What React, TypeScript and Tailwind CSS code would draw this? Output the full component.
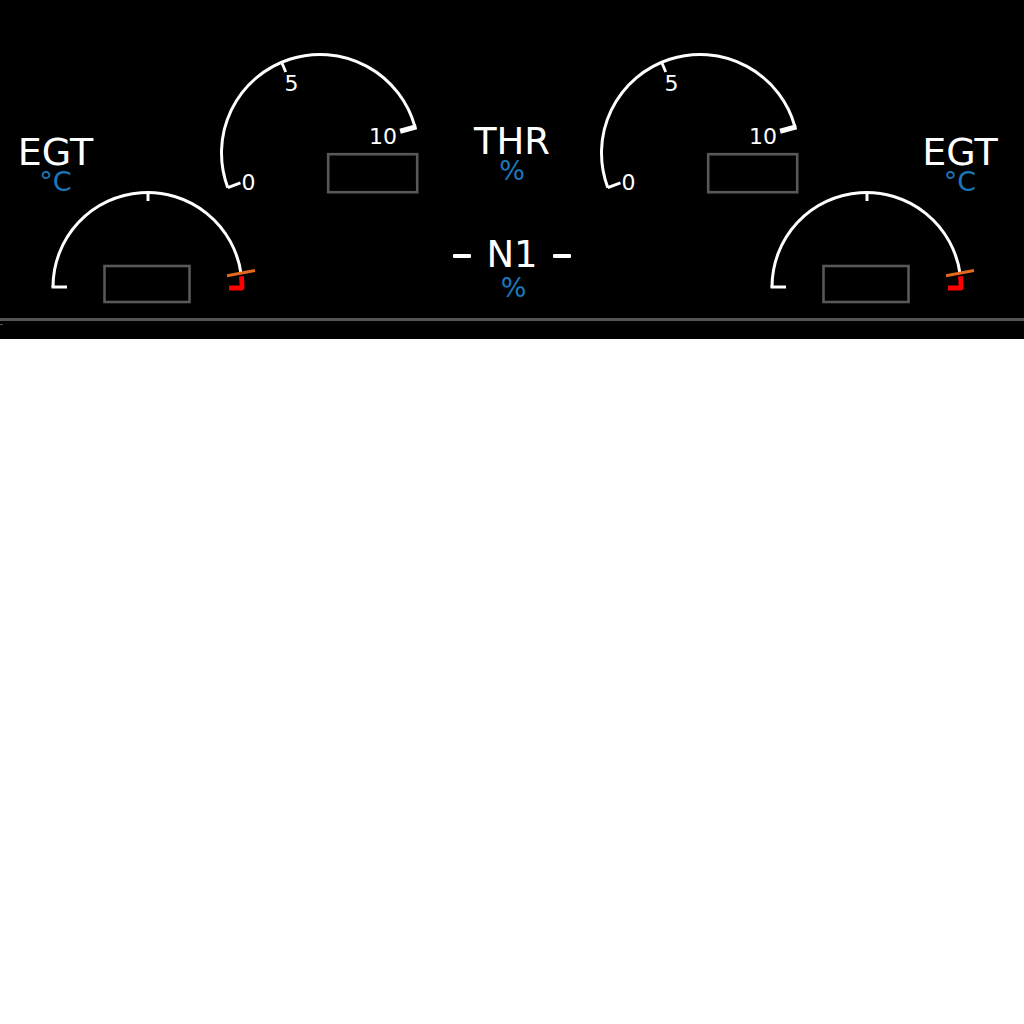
import React from "react";

const FONT = "font-['DejaVu_Sans',sans-serif]";

function polar(cx: number, cy: number, r: number, deg: number): [number, number] {
  const a = (deg * Math.PI) / 180;
  return [cx + r * Math.sin(a), cy - r * Math.cos(a)];
}

function arc(cx: number, cy: number, r: number, a0: number, a1: number) {
  const [x0, y0] = polar(cx, cy, r, a0);
  const [x1, y1] = polar(cx, cy, r, a1);
  const large = a1 - a0 > 180 ? 1 : 0;
  return `M ${x0} ${y0} A ${r} ${r} 0 ${large} 1 ${x1} ${y1}`;
}

function Tick({ cx, cy, r0, r1, a, w }: { cx: number; cy: number; r0: number; r1: number; a: number; w: number }) {
  const [x0, y0] = polar(cx, cy, r0, a);
  const [x1, y1] = polar(cx, cy, r1, a);
  return <line x1={x0} y1={y0} x2={x1} y2={y1} stroke="white" strokeWidth={w} />;
}

function ThrGauge({ left }: { left: number }) {
  const cx = 320;
  const cy = 153;
  const r = 98.5;
  const a0 = -110.6;
  const a5 = -22.9;
  const a10 = 74.8;
  return (
    <svg className="absolute" style={{ left, top: 40 }} width={240} height={170} viewBox="0 0 240 170">
      <g transform="translate(-200,-40)">
        <path d={arc(cx, cy, r, a0, a10)} stroke="white" strokeWidth={3} fill="none" />
        <Tick cx={cx} cy={cy} r0={r} r1={85} a={a0} w={3} />
        <Tick cx={cx} cy={cy} r0={r + 1} r1={88} a={a5} w={2.8} />
        <Tick cx={cx} cy={cy} r0={r + 1.5} r1={83} a={a10} w={5} />
        <g fill="white" fontFamily="'DejaVu Sans', sans-serif" fontSize={22} textAnchor="middle">
          <text x={248.5} y={190}>0</text>
          <text x={291.5} y={91}>5</text>
          <text x={383} y={144}>10</text>
        </g>
        <rect x={328.2} y={154.2} width={89} height={38} fill="none" stroke="#585858" strokeWidth={2.6} />
      </g>
    </svg>
  );
}

function EgtGauge({ left }: { left: number }) {
  const cx = 147.5;
  const cy = 287;
  const r = 94.5;
  const [rx, ry] = polar(cx, cy, r, 90);
  return (
    <svg className="absolute" style={{ left, top: 180 }} width={230} height={130} viewBox="0 0 230 130">
      <g transform="translate(-40,-180)">
        <path d={arc(cx, cy, r, -90, 82)} stroke="white" strokeWidth={3} fill="none" />
        <line x1={cx - r - 1.5} y1={cy} x2={67} y2={cy} stroke="white" strokeWidth={3} />
        <line x1={148} y1={191.5} x2={148} y2={201} stroke="white" strokeWidth={3} />
        <path
          d={`${arc(cx, cy, r, 83.5, 90)} L ${rx} ${ry + 1} L 229 ${ry + 1}`}
          stroke="#ff0000"
          strokeWidth={4.8}
          fill="none"
          strokeLinejoin="round"
        />
        <line x1={227} y1={275.7} x2={255} y2={270.5} stroke="#e2691d" strokeWidth={3} />
        <rect x={104.5} y={266} width={85} height={36} fill="none" stroke="#585858" strokeWidth={2.6} />
      </g>
    </svg>
  );
}

function EgtLabel({ center }: { center: number }) {
  return (
    <div
      className={`absolute flex w-[100px] flex-col items-center ${FONT}`}
      style={{ left: center - 50, top: 136.8 }}
    >
      <span className="h-[30px] text-[38px] leading-[30px] text-white">EGT</span>
      <span className="mt-[5.5px] h-[20px] text-[27px] leading-[20px] text-[#1a78b8]">°C</span>
    </div>
  );
}

export default function App() {
  return (
    <div className="w-[1024px] bg-white">
      <div className="flex h-[339px] w-full flex-col bg-black">
        <div className="relative h-[318px] w-full">
          <EgtLabel center={55.5} />
          <EgtLabel center={960} />

          <ThrGauge left={200} />
          <ThrGauge left={580} />

          <EgtGauge left={40} />
          <EgtGauge left={759} />

          <div className={`absolute left-[462px] top-[127.2px] flex w-[100px] flex-col items-center ${FONT}`}>
            <span className="h-[30px] text-[37px] leading-[30px] text-white">THR</span>
            <span className="mt-[3.4px] h-[20px] text-[27px] leading-[20px] text-[#1a78b8]">%</span>
          </div>

          <div className={`absolute left-[412px] top-[240.2px] flex w-[200px] flex-col items-center ${FONT}`}>
            <div className="flex h-[30px] items-center gap-[15px]">
              <div className="mt-[1px] h-[4px] w-[18px] rounded-[1px] bg-white" />
              <span className="h-[30px] text-[37px] leading-[30px] text-white">N1</span>
              <div className="mt-[1px] h-[4px] w-[18px] rounded-[1px] bg-white" />
            </div>
            <span className="ml-[3px] mt-[7.4px] h-[20px] text-[27px] leading-[20px] text-[#1a78b8]">%</span>
          </div>
        </div>
        <div className="h-[3px] w-full bg-[#555555]" />
        <div className="flex-1">
          <div className="mt-[3px] h-[1px] w-[3px] bg-[#555555]" />
        </div>
      </div>
    </div>
  );
}
